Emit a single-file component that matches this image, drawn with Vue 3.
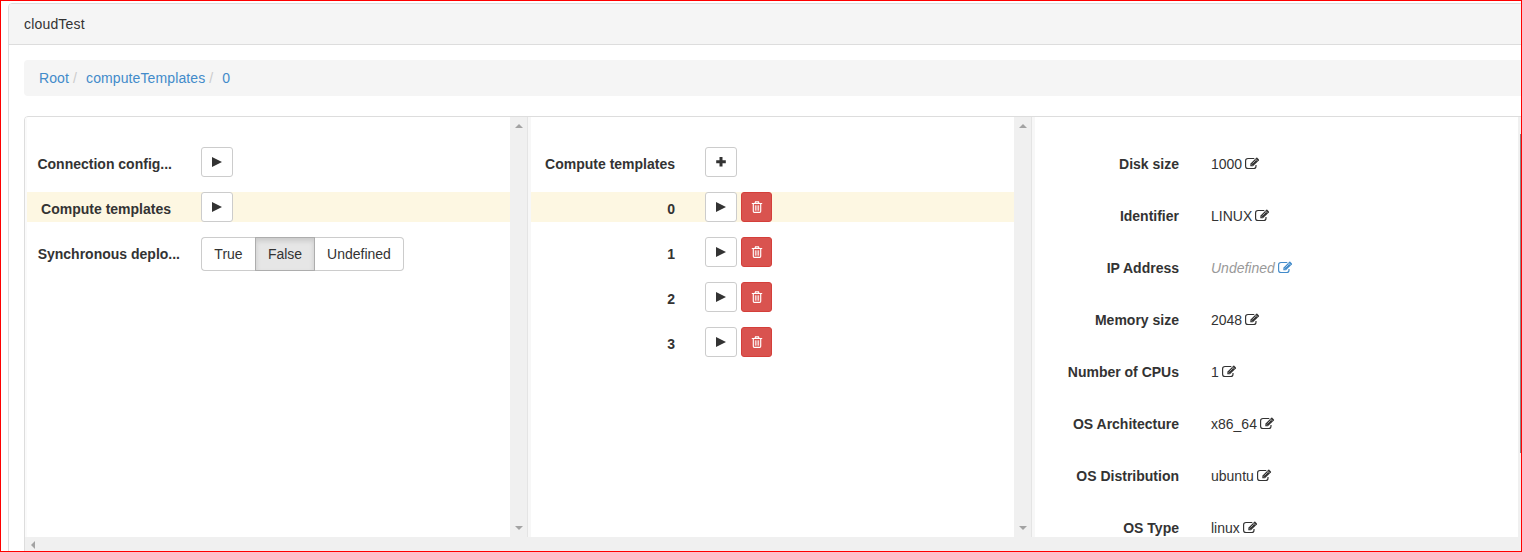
<script setup>
const crumbs = ['Root', 'computeTemplates', '0']
const items = ['0', '1', '2', '3']
const fields = [
  { label: 'Disk size', value: '1000' },
  { label: 'Identifier', value: 'LINUX' },
  { label: 'IP Address', value: 'Undefined', empty: true },
  { label: 'Memory size', value: '2048' },
  { label: 'Number of CPUs', value: '1' },
  { label: 'OS Architecture', value: 'x86_64' },
  { label: 'OS Distribution', value: 'ubuntu' },
  { label: 'OS Type', value: 'linux' },
]
</script>

<template>
  <div class="frame">
    <section class="panel">
      <header class="heading">cloudTest</header>
      <div class="body">
        <nav class="crumbs">
          <template v-for="(c, i) in crumbs" :key="c">
            <span v-if="i" class="slash">/</span><a>{{ c }}</a>
          </template>
        </nav>
        <div class="browser">
          <div class="columns">
            <div class="column first">
              <div class="content">
                <div class="row">
                  <label class="connection">Connection config...</label>
                  <button class="btn"><svg width="12" height="12" viewBox="0 0 12 12"><path d="M1 1L11 6 1 11z" fill="#333" /></svg></button>
                </div>
                <div class="row selected">
                  <label>Compute templates</label>
                  <button class="btn"><svg width="12" height="12" viewBox="0 0 12 12"><path d="M1 1L11 6 1 11z" fill="#333" /></svg></button>
                </div>
                <div class="row">
                  <label class="sync">Synchronous deplo...</label>
                  <div class="group"><button>True</button><button class="active">False</button><button>Undefined</button></div>
                </div>
              </div>
              <div class="scroll"><i class="up"></i><i class="down"></i></div>
            </div>
            <div class="column">
              <div class="content">
                <div class="row">
                  <label>Compute templates</label>
                  <button class="btn"><svg width="12" height="12" viewBox="0 0 12 12"><path d="M4.5 1h3v3.2h3.3v3H7.5v3.3h-3V7.2H1.2v-3h3.3z" fill="#333" /></svg></button>
                </div>
                <div v-for="(n, i) in items" :key="n" class="row" :class="{ selected: i === 0 }">
                  <label>{{ n }}</label>
                  <button class="btn"><svg width="12" height="12" viewBox="0 0 12 12"><path d="M1 1L11 6 1 11z" fill="#333" /></svg></button>
                  <button class="btn danger">
                    <svg width="12" height="12" viewBox="0 0 12 12" fill="none" stroke="#fff">
                      <path d="M.8 2.5h10.4M4 2.5l.5-1.7h3L8 2.5M2.3 3v7.2q0 1.2 1 1.2h5.4q1 0 1-1.2V3" stroke-width="1.15" />
                      <path d="M4.4 4.3v5.4M6 4.3v5.4M7.6 4.3v5.4" stroke-width=".85" />
                    </svg>
                  </button>
                </div>
              </div>
              <div class="scroll"><i class="up"></i><i class="down"></i></div>
            </div>
            <div class="column">
              <div class="content details">
                <div v-for="f in fields" :key="f.label" class="field">
                  <label>{{ f.label }}</label>
                  <span class="value" :class="{ empty: f.empty }">{{ f.value }}</span>
                  <svg class="edit" :class="{ blue: f.empty }" width="15" height="13" viewBox="0 0 15 13">
                    <path d="M9.3 1.5H3Q.6 1.5.6 3.8v5.4q0 2.3 2.4 2.3h5.6q2.4 0 2.4-2.3V8" fill="none" stroke="currentColor" stroke-width="1.15" />
                    <path d="M5.3 9.3V6.8L11.3.8q.5-.4 1 0l1.6 1.6q.4.5 0 1L7.9 9.3z" fill="currentColor" />
                    <path d="M6.1 7.4l1.1 1.1M7.5 6.5l3.3-3.3M10.4 1.9l2.3 2.3" stroke="#fff" stroke-width=".55" />
                  </svg>
                </div>
              </div>
              <div class="scroll last"><b></b></div>
            </div>
          </div>
          <div class="hscroll"><i></i></div>
        </div>
      </div>
    </section>
  </div>
</template>

<style>
body { margin: 0; overflow: hidden; }
</style>

<style scoped>
* { box-sizing: border-box; }
.frame { position: relative; width: 1522px; height: 552px; padding: 3px 0 0 8px; overflow: hidden; background: #fff; color: #333; font: 14px/20px "Liberation Sans", Arial, sans-serif; }
.frame::after { content: ""; position: absolute; inset: 0; border: 1px solid #f00; pointer-events: none; }
.panel { width: 1540px; height: 600px; border: 1px solid #ddd; border-radius: 4px; }
.heading { height: 41px; padding: 10px 15px; background: #f5f5f5; border-bottom: 1px solid #ddd; border-radius: 3px 3px 0 0; letter-spacing: .18px; }
.body { padding: 15px 0 0 15px; }
.crumbs { display: flex; height: 36px; padding: 8px 15px; background: #f5f5f5; border-radius: 4px; color: #428bca; letter-spacing: .11px; }
.slash { color: #ccc; width: 17px; padding-left: 4px; }
.browser { height: 460px; margin-top: 20px; border: 1px solid #ddd; border-radius: 4px; overflow: hidden; }
.columns { display: flex; height: 420px; }
.column { display: flex; flex: none; width: 504px; border-left: 1px solid #e4e4e4; }
.column.first { width: 502px; border: 0; }
.content { flex: 1; padding-top: 30px; border-left: 3px solid #f7f7f7; overflow: hidden; }
.first .content { border-left-width: 2px; border-left-color: #fafafa; }
.row { display: flex; height: 30px; margin-bottom: 15px; }
.row label { flex: none; width: 174px; padding: 7px 30px 0 0; text-align: right; white-space: nowrap; }
label { font-weight: bold; }
.row .connection { padding-right: 29px; }
.row .sync { padding-right: 21px; }
.selected { background: #fdf7e2; }
.btn { width: 32px; height: 30px; padding: 0 0 1px; display: flex; align-items: center; justify-content: center; border: 1px solid #ccc; border-radius: 3px; background: #fff; }
.danger { width: 31px; margin-left: 4px; background: #d9534f; border-color: #d43f3a; }
.group { display: flex; height: 34px; }
.group button { width: 55px; padding: 0; border: 1px solid #ccc; border-right: 0; background: #fff; color: #333; font: inherit; }
.group button:first-child { width: 54px; border-radius: 4px 0 0 4px; }
.group button:last-child { width: 89px; border-left: 0; border-right: 1px solid #ccc; border-radius: 0 4px 4px 0; }
.group .active { width: 60px; background: #e6e6e6; border: 1px solid #adadad; box-shadow: inset 0 3px 5px rgba(0, 0, 0, .125); }
.scroll { flex: none; display: flex; flex-direction: column; justify-content: space-between; align-items: center; width: 17px; padding: 7px 0; background: #f0f0f0; }
.up, .down { width: 0; height: 0; border: 4px solid transparent; border-top-width: 0; border-bottom-color: #a3a3a3; }
.down { border-top: 4px solid #a3a3a3; border-bottom-width: 0; }
.scroll.last { padding: 17px 0 0 2px; display: block; }
.last b { display: block; width: 13px; height: 319px; background: #888; }
.details { padding-top: 21px; }
.field { display: flex; align-items: center; height: 52px; }
.field label { width: 144px; margin-right: 32px; text-align: right; }
.empty { color: #999; font-style: italic; }
.edit { margin: 0 0 1px 3px; }
.blue { color: #428bca; }
.hscroll { height: 20px; padding: 4px 0 0 6px; background: #f0f0f0; }
.hscroll i { display: block; width: 0; height: 0; border: 4px solid transparent; border-left-width: 0; border-right-color: #a3a3a3; }
</style>
